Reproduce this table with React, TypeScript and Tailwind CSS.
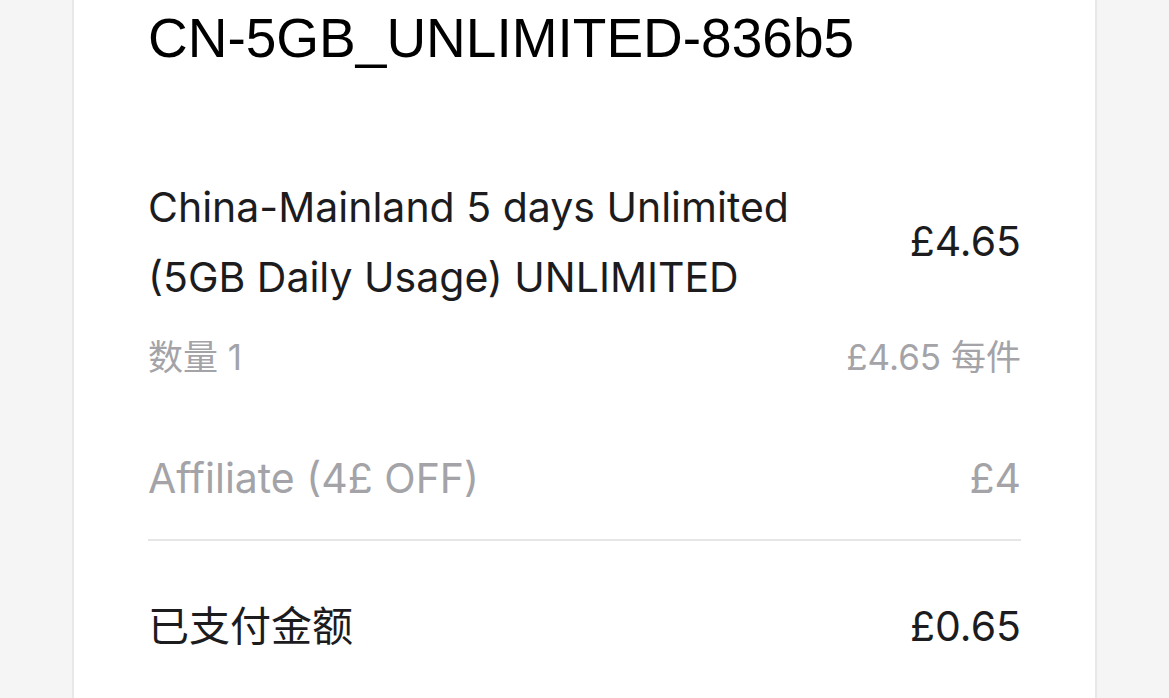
export default function App() {
  const body = "font-['Inter','Noto_Sans_CJK_SC',sans-serif]";
  return (
    <div className="min-h-screen bg-[#f5f5f5] overflow-hidden">
      <div className="ml-[72px] w-[1025px] min-h-[698px] bg-white border-x-2 border-[#e8e8e8] px-[74px] pt-[11px]">
        <h1 className="font-['Liberation_Sans',Arial,sans-serif] text-[55px] leading-[55px] text-black">
          CN-5GB_UNLIMITED-836b5
        </h1>

        <div className={`${body} mt-[106px]`}>
          <div className="flex items-center justify-between">
            <p className="text-[41px] leading-[70px] text-[#1c1c1e] w-[700px]">
              China-Mainland 5 days Unlimited (5GB Daily Usage) UNLIMITED
            </p>
            <span className="text-[41px] text-[#1c1c1e]">£4.65</span>
          </div>
          <div className="flex justify-between text-[35px] leading-[50px] text-[#a3a3a8] mt-[20px]">
            <span>数量 1</span>
            <span>£4.65 每件</span>
          </div>

          <div className="flex justify-between text-[41px] leading-[60px] text-[#a3a3a8] mt-[66px]">
            <span>Affiliate (4£ OFF)</span>
            <span>£4</span>
          </div>

          <div className="h-[2px] bg-[#e6e6e6] mt-[31px]" />

          <div className="flex justify-between text-[41px] leading-[60px] text-[#1c1c1e] mt-[55px]">
            <span>已支付金额</span>
            <span>£0.65</span>
          </div>
        </div>
      </div>
    </div>
  );
}
